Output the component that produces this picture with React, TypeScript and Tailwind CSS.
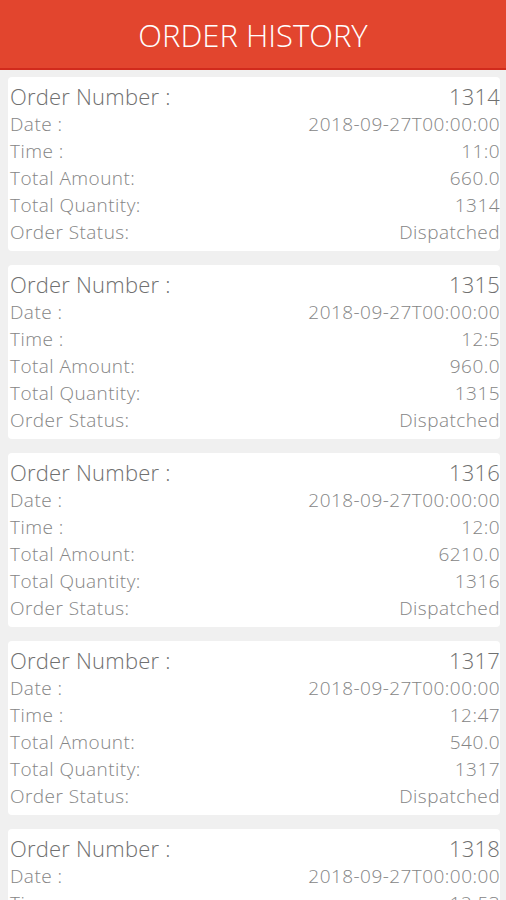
const orders = [
  { no: "1314", date: "2018-09-27T00:00:00", time: "11:0", amount: "660.0", qty: "1314", status: "Dispatched" },
  { no: "1315", date: "2018-09-27T00:00:00", time: "12:5", amount: "960.0", qty: "1315", status: "Dispatched" },
  { no: "1316", date: "2018-09-27T00:00:00", time: "12:0", amount: "6210.0", qty: "1316", status: "Dispatched" },
  { no: "1317", date: "2018-09-27T00:00:00", time: "12:47", amount: "540.0", qty: "1317", status: "Dispatched" },
  { no: "1318", date: "2018-09-27T00:00:00", time: "12:53", amount: "780.0", qty: "1318", status: "Dispatched" },
];

function Row({ label, value }: { label: string; value: string }) {
  return (
    <div className="flex justify-between items-center h-[27px] text-[19px] leading-none tracking-[0.45px] text-[#858585]">
      <span>{label}</span>
      <span>{value}</span>
    </div>
  );
}

export default function App() {
  return (
    <div
      className="w-[506px] h-[900px] overflow-hidden bg-[#f0f0f0] font-light"
      style={{ fontFamily: '"Open Sans", "Liberation Sans", sans-serif' }}
    >
      <header className="h-[70px] bg-[#e2452e] border-b-2 border-[#d12a1c] flex items-center justify-center">
        <h1 className="text-[31px] leading-none text-white font-light mt-[2px]">ORDER HISTORY</h1>
      </header>

      <div className="pl-2 pr-[6px] pt-[7px] flex flex-col gap-[14px]">
        {orders.map((o) => (
          <div key={o.no} className="bg-white rounded-[4px] pl-[2px] pr-0 pt-[5px] pb-[5px]">
            <div className="flex justify-between items-start pt-[3px] h-[29px] text-[22px] leading-none tracking-[0.2px] text-[#707070]">
              <span>Order Number :</span>
              <span>{o.no}</span>
            </div>
            <Row label="Date :" value={o.date} />
            <Row label="Time :" value={o.time} />
            <Row label="Total Amount:" value={o.amount} />
            <Row label="Total Quantity:" value={o.qty} />
            <Row label="Order Status:" value={o.status} />
          </div>
        ))}
      </div>
    </div>
  );
}
